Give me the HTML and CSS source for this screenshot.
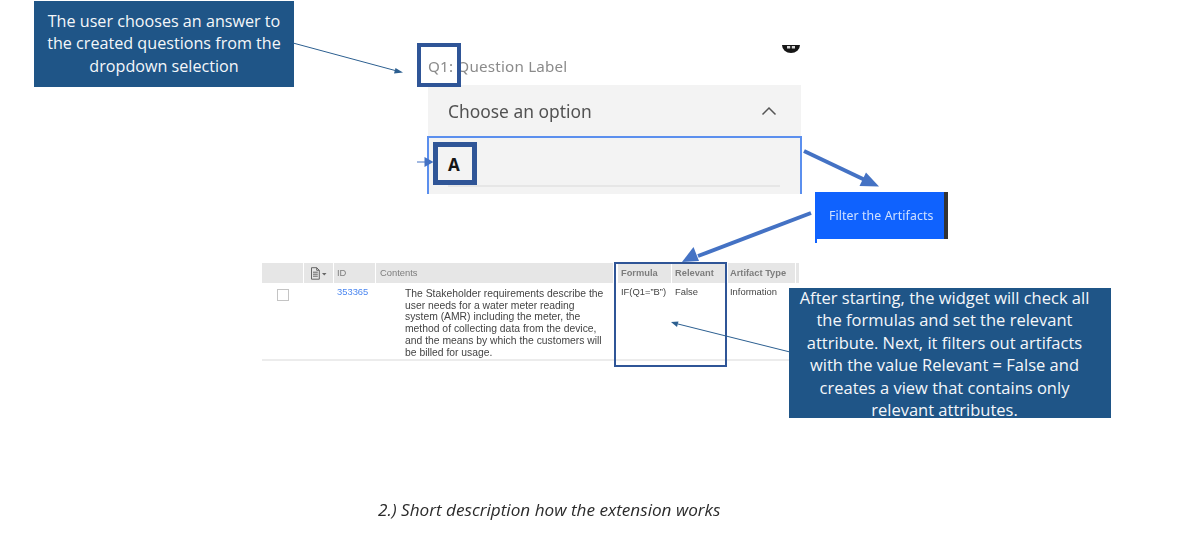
FILE: index.html
```html
<!DOCTYPE html>
<html lang="en">
<head>
<meta charset="utf-8">
<title>Short description how the extension works</title>
<link rel="stylesheet" href="styles.css">
</head>
<body>
<main class="slide">
  <div class="callout callout-top"><div class="callout-text">The user chooses an answer to<br>the created questions from the<br>dropdown selection</div></div>

  <section class="shot shot-dropdown">
    <p class="question">Q1: Question Label</p>
    <div class="select-head">
      <span>Choose an option</span>
      <svg class="chevron" viewBox="0 0 16 10" aria-hidden="true"><path d="M1.500 8.500 8 2l6.500 6.500"/></svg>
    </div>
    <div class="select-list">
      <div class="option">A</div>
      <div class="option-line"></div>
    </div>
  </section>

  <svg class="add-icon" viewBox="0 0 18 8" aria-hidden="true">
    <path class="add-disc" d="M0 0h18a9 8 0 0 1-18 0z"/>
    <path class="add-plus" d="M5 1h3.200v2.600H5zM9.800 1H13v2.600H9.800z"/>
  </svg>

  <div class="mark mark-q"></div>
  <div class="mark mark-a"></div>

  <div class="filter-btn"><span>Filter the Artifacts</span></div>

  <section class="shot shot-table">
    <div class="grid grid-head">
      <div class="th"></div>
      <div class="th th-icon">
        <svg viewBox="0 0 18 13" aria-hidden="true">
          <path class="doc" d="M1.500.7h5.200l2.600 2.600v8.900H1.500zM6.700.7v2.600h2.600M3 5.200h4.800M3 7.200h4.800M3 9.200h4.800"/>
          <path class="caret" d="M12 6h4.500l-2.250 2.500z"/>
        </svg>
      </div>
      <div class="th th-id">ID</div>
      <div class="th th-contents">Contents</div>
      <div class="th-gap"></div>
      <div class="th strong">Formula</div>
      <div class="th strong">Relevant</div>
      <div class="th strong th-type">Artifact Type</div>
      <div class="th"></div>
    </div>
    <div class="grid grid-row">
      <div class="td td-check"><span class="checkbox"></span></div>
      <div class="td"></div>
      <div class="td id-link">353365</div>
      <div class="td td-text">The Stakeholder requirements describe the<br>user needs for a water meter reading<br>system (AMR) including the meter, the<br>method of collecting data from the device,<br>and the means by which the customers will<br>be billed for usage.</div>
      <div class="td"></div>
      <div class="td">IF(Q1=”B”)</div>
      <div class="td">False</div>
      <div class="td td-type">Information</div>
      <div class="td"></div>
    </div>
  </section>

  <div class="mark mark-formula"></div>

  <div class="callout callout-bottom"><div class="callout-text">After starting, the widget will check all<br>the formulas and set the relevant<br>attribute. Next, it filters out artifacts<br>with the value Relevant = False and<br>creates a view that contains only<br>relevant attributes.</div></div>

  <svg class="arrows" viewBox="0 0 1188 533" aria-hidden="true">
    <path class="thin" d="M293 43 397 71"/>
    <path class="thin-head" d="m403 72.500-7.500-4.500-1.500 5.500z"/>
    <path class="thin" d="M790 352 678 324"/>
    <path class="thin-head" d="m671 322 7.500-.5-1.500 5.500z"/>
    <path class="thick" d="M804 151 864 179.500"/>
    <path class="thick-head" d="m879 186.500-19.500-.5 6.500-13.500z"/>
    <path class="thick" d="M811 213 698 256"/>
    <path class="thick-head" d="m682 262 11.500-15 5.500 14z"/>
    <path class="thin-blue" d="M417 162h8"/>
    <path class="thick-head" d="m433.500 162-9-5v10z"/>
  </svg>

  <p class="caption">2.) Short description how the extension works</p>
</main>
</body>
</html>
```
FILE: styles.css
```css
* { box-sizing: border-box; }

html, body {
  margin: 0;
  background: #fff;
}

.slide {
  position: relative;
  width: 1188px;
  height: 533px;
  overflow: hidden;
  font-family: "Open Sans", "Noto Sans", sans-serif;
}

/* slide callouts */
.callout {
  position: absolute;
  background: #1f5587;
  color: #f4f7fa;
  text-align: center;
  line-height: 22.400px;
}
.callout-top {
  left: 34px;
  top: 1px;
  width: 260px;
  height: 86px;
  font-size: 16.150px;
}
.callout-top .callout-text { margin-top: 9px; }
.callout-bottom {
  left: 789px;
  top: 288px;
  width: 322px;
  height: 130px;
  padding-right: 11px;
  font-size: 16.500px;
}
.callout-bottom .callout-text { margin-top: -1px; }

/* dropdown screenshot */
.shot { position: absolute; }

.shot-dropdown {
  left: 427px;
  top: 54px;
  width: 375px;
  height: 140px;
  display: flex;
  flex-direction: column;
  font-family: "Noto Sans", sans-serif;
  filter: blur(0.45px);
}
.question {
  margin: 0 0 0 1px;
  height: 31px;
  padding-top: 3px;
  font-size: 15.200px;
  line-height: 18px;
  letter-spacing: 0.2px;
  color: #8b8b8b;
}
.select-head {
  margin-left: 1px;
  margin-right: 1px;
  height: 51px;
  padding: 0 24px 0 20px;
  background: #f3f3f3;
  display: flex;
  align-items: center;
  justify-content: space-between;
  font-size: 17.400px;
  color: #525252;
}
.chevron {
  width: 16px;
  height: 10px;
  fill: none;
  stroke: #555;
  stroke-width: 1.500;
}
.select-list {
  flex: 1;
  background: #f3f3f3;
  border: 2px solid #5b8fee;
  border-bottom: 0;
  padding: 6px 0 0 19px;
}
.option {
  height: 40px;
  padding: 11px 0 0 0;
  font-size: 17px;
  line-height: 20px;
  font-weight: 700;
  color: #161616;
}
.option-line {
  width: 332px;
  height: 2px;
  margin-top: 1px;
  background: #e6e6e6;
}

.add-icon {
  position: absolute;
  left: 782px;
  top: 45px;
  width: 18px;
  height: 8px;
  filter: blur(0.4px);
}
.add-disc { fill: #161616; }
.add-plus { fill: #d8d8d8; }

/* navy outlines */
.mark {
  position: absolute;
  border: 4px solid #2f5597;
}
.mark-q { left: 417px; top: 43px; width: 44px; height: 44px; }
.mark-a { left: 433px; top: 142px; width: 44px; height: 43px; border-width: 5px; }
.mark-formula { left: 614px; top: 262px; width: 113px; height: 105px; border-width: 2px; }

/* filter button */
.filter-btn {
  position: absolute;
  left: 815px;
  top: 192px;
  width: 133px;
  height: 47px;
  padding: 0 0 1px 14px;
  background: #0f62fe;
  border-right: 4px solid #333;
  display: flex;
  align-items: center;
  font-family: "Noto Sans", sans-serif;
  font-size: 12.300px;
  letter-spacing: 0.1px;
  color: #cfe0ff;
  filter: blur(0.3px);
}
.filter-btn::after {
  content: "";
  position: absolute;
  left: 0;
  top: 100%;
  width: 2px;
  height: 4px;
  background: #0f62fe;
}

/* table screenshot */
.shot-table {
  left: 262px;
  top: 263px;
  width: 538px;
  font-family: "Liberation Sans", Arial, sans-serif;
  font-size: 9.400px;
  filter: blur(0.35px);
}
.grid {
  display: grid;
  grid-template-columns: 41px 29px 41px 237px 3px 53px 55px 67px 3px;
  column-gap: 1px;
}
.grid-head { height: 20px; }
.th {
  background: #e6e6e6;
  color: #7d7d7d;
  padding-left: 2px;
  line-height: 20px;
}
.th-id { padding-left: 3px; }
.th-contents { padding-left: 4px; }
.th-gap { background: #fff; }
.th.strong { font-weight: 700; padding-left: 3px; font-size: 9.300px; }
.th.th-type { padding-left: 2px; }
.th-icon { padding: 4px 0 0 6px; }
.th-icon svg { display: block; width: 18px; height: 13px; }
.doc { fill: none; stroke: #666; stroke-width: 1; }
.caret { fill: #666; }

.grid-row {
  height: 78px;
  padding-top: 3px;
  border-bottom: 2px solid #ececec;
  color: #444;
  line-height: 11.700px;
}
.td { padding-left: 3px; }
.td-type { padding-left: 2px; }
.id-link { color: #4a86f0; padding-left: 3px; }
.td-check { padding: 3px 0 0 15px; }
.checkbox {
  display: block;
  width: 12px;
  height: 12px;
  background: #fff;
  border: 1px solid #c4c4c4;
}
.td-text { padding: 2px 0 0 29px; white-space: nowrap; font-size: 10.350px; }

/* overlay arrows */
.arrows {
  position: absolute;
  left: 0;
  top: 0;
  width: 1188px;
  height: 533px;
  pointer-events: none;
}
.thin { fill: none; stroke: #2c5f90; stroke-width: 1; }
.thin-head { fill: #2c5f90; }
.thin-blue { fill: none; stroke: #4472c4; stroke-width: 1; }
.thick { fill: none; stroke: #4472c4; stroke-width: 4; }
.thick-head { fill: #4472c4; }

.caption {
  position: absolute;
  left: 378px;
  top: 499px;
  margin: 0;
  font-size: 17.150px;
  line-height: 21px;
  font-style: italic;
  color: #2b2b2b;
}
```
